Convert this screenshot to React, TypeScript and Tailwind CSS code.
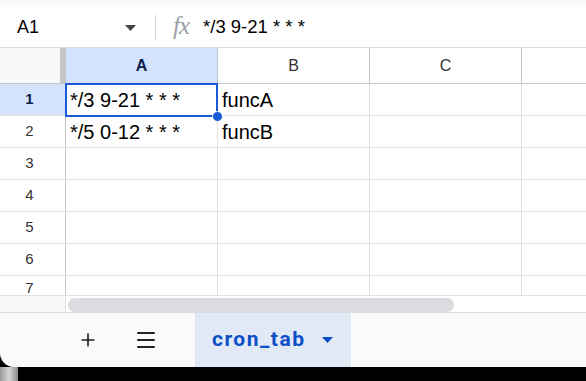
import { Plus, Menu } from 'lucide-react';

const ROWS = [
    { n: 1, a: '*/3 9-21 * * *', b: 'funcA' },
    { n: 2, a: '*/5 0-12 * * *', b: 'funcB' },
    { n: 3, a: '', b: '' },
    { n: 4, a: '', b: '' },
    { n: 5, a: '', b: '' },
    { n: 6, a: '', b: '' },
];

function Caret({ className }: { className?: string }) {
    return (
        <svg width="11" height="6" viewBox="0 0 11 6" className={className}>
            <path d="M0 0h11L5.5 6z" fill="currentColor" />
        </svg>
    );
}

export default function App() {
    return (
        <div className="w-[586px] h-[381px] flex flex-col bg-black overflow-hidden font-['Liberation_Sans',Arial,sans-serif] text-black">
            <div className="h-[7px] bg-[#f8f9fb]" />

            {/* formula bar */}
            <div className="h-[41px] bg-white border-b border-[#dadce0] flex items-center">
                <span className="ml-[17px] w-[108px] text-[18px]">A1</span>
                <Caret className="text-[#444] mt-[1px]" />
                <div className="ml-[19px] w-px h-[25px] bg-[#d6d6d6]" />
                <span className="ml-[17px] text-[25px] italic text-[#9aa0a6] font-['Liberation_Serif',serif] tracking-[-1px] leading-none -mt-[3px]">fx</span>
                <span className="ml-[14px] text-[18.5px]">*/3 9-21 * * *</span>
            </div>

            {/* column headers */}
            <div className="h-[36px] flex bg-white border-b border-[#c4c7c5]">
                <div className="w-[66px] flex bg-[#f8f9fa]">
                    <div className="flex-1" />
                    <div className="w-[6px] bg-[#c4c7c5]" />
                </div>
                <div className="w-[152px] bg-[#d3e3fd] border-r border-[#c4c7c5] flex items-center justify-center text-[16px] font-bold text-[#0b1f4a]">A</div>
                <div className="w-[152px] border-r border-[#c4c7c5] flex items-center justify-center text-[16px] text-[#333]">B</div>
                <div className="w-[152px] border-r border-[#c4c7c5] flex items-center justify-center text-[16px] text-[#333]">C</div>
                <div className="flex-1" />
            </div>

            {/* rows */}
            {ROWS.map((r) => (
                <div key={r.n} className="h-[32px] flex bg-white border-b border-[#e1e1e1]">
                    <div
                        className={
                            r.n === 1
                                ? 'w-[66px] border-r border-[#c4c7c5] bg-[#d3e3fd] flex items-center justify-center text-[15px] font-bold text-[#0b1f4a] pr-[6px]'
                                : 'w-[66px] border-r border-[#c4c7c5] bg-white flex items-center justify-center text-[15px] text-[#333] pr-[6px]'
                        }
                    >
                        {r.n}
                    </div>
                    <div className="relative w-[152px] border-r border-[#e1e1e1] flex items-center pl-[4px] text-[20px]">
                        {r.a}
                        {r.n === 1 && (
                            <>
                                <div className="absolute -top-[1px] -left-[1px] -right-[1px] -bottom-[2px] border-2 border-[#1a5ad7]" />
                                <div className="absolute -right-[6px] -bottom-[7px] w-[11px] h-[11px] rounded-full bg-[#1a5ad7] border border-white z-10" />
                            </>
                        )}
                    </div>
                    <div className="w-[152px] border-r border-[#e1e1e1] flex items-center pl-[4px] text-[20px]">{r.b}</div>
                    <div className="w-[152px] border-r border-[#e1e1e1]" />
                    <div className="flex-1" />
                </div>
            ))}
            <div className="h-[20px] flex bg-white border-b border-[#e1e1e1] overflow-hidden">
                <div className="w-[66px] border-r border-[#c4c7c5] flex justify-center pt-[3px] text-[15px] leading-[18px] text-[#333] pr-[6px]">7</div>
                <div className="w-[152px] border-r border-[#e1e1e1]" />
                <div className="w-[152px] border-r border-[#e1e1e1]" />
                <div className="w-[152px] border-r border-[#e1e1e1]" />
                <div className="flex-1" />
            </div>

            {/* scrollbar */}
            <div className="h-[17px] flex bg-white border-b border-[#dadce0]">
                <div className="w-[66px] bg-[#f8f9fa] border-r border-[#e1e1e1]" />
                <div className="ml-[2px] mt-[2px] w-[386px] h-[14px] rounded-full bg-[#dadce0]" />
            </div>

            {/* sheet tabs */}
            <div className="h-[54px] flex items-stretch bg-[#f9fafb] rounded-bl-[14px]">
                <div className="w-[195px] flex items-center">
                    <Plus size={20} strokeWidth={2} className="ml-[78px] text-[#222]" />
                    <Menu size={24} strokeWidth={2} className="ml-[36px] text-[#222]" />
                </div>
                <div className="w-[156px] bg-[#e1e9f7] flex items-center">
                    <span className="ml-[17px] text-[21px] font-bold text-[#0b4fc7] tracking-[1.5px] font-['Roboto',sans-serif]">cron_tab</span>
                    <Caret className="ml-[17px] text-[#0b4fc7]" />
                </div>
                <div className="flex-1" />
            </div>
            <div className="h-[14px] flex">
                <div className="w-[18px] bg-gradient-to-r from-[#9a9a9a] via-[#d6d6d6] to-[#8a8a8a]" />
                <div className="flex-1 bg-black" />
            </div>
        </div>
    );
}
